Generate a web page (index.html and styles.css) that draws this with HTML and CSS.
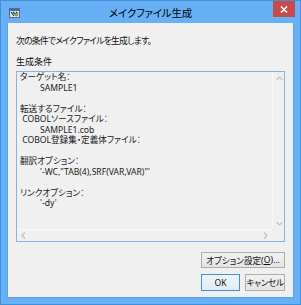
FILE: index.html
```html
<!DOCTYPE html>
<html lang="ja">
<head>
<meta charset="utf-8">
<link rel="stylesheet" href="styles.css">
</head>
<body>
<div class="window">
  <div class="titlebar">
    <div class="tb-left">
      <svg class="app-icon" width="11" height="10" viewBox="0 0 11 10">
        <rect x="0.5" y="0.5" width="10" height="9" fill="#dfe6ee" stroke="#5c6a7a"/>
        <rect x="1" y="1" width="9" height="2" fill="#3d6fb0"/>
        <path d="M2 4 L5 8 M4 4 L8 8 M7 4 L9 6" stroke="#2f3c4a" stroke-width="1.2"/>
        <rect x="6" y="5" width="3" height="3" fill="#8a9a5a"/>
      </svg>
    </div>
    <div class="title">メイクファイル生成</div>
    <div class="tb-right">
      <div class="close-btn">
        <svg width="8" height="7" viewBox="0 0 8 7"><path d="M1 0.5 L7 6.5 M7 0.5 L1 6.5" stroke="#fff" stroke-width="1.6"/></svg>
      </div>
    </div>
  </div>
  <div class="client">
    <div class="message">次の条件でメイクファイルを生成します。</div>
    <div class="label">生成条件</div>
    <div class="textbox">
      <div class="content">
        <div class="line">ターゲット名：</div>
        <div class="line indent">SAMPLE1</div>
        <div class="line"> </div>
        <div class="line">転送するファイル：</div>
        <div class="line"> COBOLソースファイル：</div>
        <div class="line indent">SAMPLE1.cob</div>
        <div class="line"> COBOL登録集・定義体ファイル：</div>
        <div class="line"> </div>
        <div class="line">翻訳オプション：</div>
        <div class="line indent">'-WC,"TAB(4),SRF(VAR,VAR)"'</div>
        <div class="line"> </div>
        <div class="line">リンクオプション：</div>
        <div class="line indent">'-dy'</div>
      </div>
      <div class="vscroll">
        <svg width="7" height="5" viewBox="0 0 7 5"><path d="M0.5 4 L3.5 1 L6.5 4" fill="none" stroke="#c2c2c2" stroke-width="1.2"/></svg>
        <svg width="7" height="5" viewBox="0 0 7 5"><path d="M0.5 1 L3.5 4 L6.5 1" fill="none" stroke="#c2c2c2" stroke-width="1.2"/></svg>
      </div>
      <div class="hscroll">
        <svg width="5" height="7" viewBox="0 0 5 7"><path d="M4 0.5 L1 3.5 L4 6.5" fill="none" stroke="#c2c2c2" stroke-width="1.2"/></svg>
        <svg width="5" height="7" viewBox="0 0 5 7"><path d="M1 0.5 L4 3.5 L1 6.5" fill="none" stroke="#c2c2c2" stroke-width="1.2"/></svg>
      </div>
      <div class="corner"></div>
    </div>
    <div class="buttons">
      <div class="btn btn-options">オプション設定(<u>O</u>)...</div>
      <div class="btn-row">
        <div class="btn btn-ok">OK</div>
        <div class="btn btn-cancel">キャンセル</div>
      </div>
    </div>
  </div>
</div>
</body>
</html>
```
FILE: styles.css
```css
* { box-sizing: border-box; }
html, body {
  margin: 0;
  padding: 0;
  background: #ffffff;
}
body {
  font-family: "Noto Sans", "Noto Sans CJK JP", sans-serif;
  font-feature-settings: "palt";
  color: #1a1a1a;
}
.window {
  width: 301px;
  height: 305px;
  background: #67b0f5;
  border: 1px solid #3f8fd9;
  display: flex;
  flex-direction: column;
}
.titlebar {
  height: 22px;
  display: grid;
  grid-template-columns: 1fr auto 1fr;
  align-items: start;
}
.tb-left {
  padding: 7px 0 0 8px;
  display: flex;
}
.app-icon { display: block; }
.title {
  font-size: 10.5px;
  line-height: 12px;
  padding-top: 6px;
  color: #000;
  letter-spacing: -0.2px;
}
.tb-right {
  display: flex;
  justify-content: flex-end;
  padding-right: 5px;
}
.close-btn {
  width: 22px;
  height: 16px;
  background: #c74a4b;
  display: flex;
  align-items: center;
  justify-content: center;
}
.close-btn svg { display: block; }
.client {
  margin: 0 6px 0 6px;
  height: 275px;
  background: #f0f0f0;
  border: 1px solid #5aa2e6;
  border-top: none;
  padding: 12px 8px 5px 8px;
  display: flex;
  flex-direction: column;
}
.message {
  font-size: 8.8px;
  line-height: 12px;
  height: 12px;
  letter-spacing: -0.75px;
  white-space: nowrap;
  color: #111;
}
.label {
  margin-top: 9px;
  font-size: 9px;
  line-height: 12px;
  height: 12px;
  color: #111;
}
.textbox {
  margin-top: 3px;
  height: 171px;
  border: 1px solid #80b5ea;
  background: #f0f0f0;
  display: grid;
  grid-template-columns: 1fr 12px;
  grid-template-rows: 1fr 12px;
}
.content {
  padding: 0 0 0 3px;
  overflow: hidden;
}
.line {
  font-size: 8.6px;
  line-height: 10.5px;
  height: 10.5px;
  white-space: pre;
  color: #1a1a1a;
}
.indent { padding-left: 20px; }
.vscroll {
  border-left: 1px solid #f9f9f2;
  display: flex;
  flex-direction: column;
  justify-content: space-between;
  align-items: center;
  padding: 4px 0 3px 1px;
}
.hscroll {
  border-top: 1px solid #f9f9f2;
  display: flex;
  justify-content: space-between;
  align-items: center;
  padding: 0 4px 0 4px;
}
.vscroll svg, .hscroll svg { display: block; }
.corner { background: #f0f0f0; }
.buttons {
  margin-top: 10px;
  display: flex;
  flex-direction: column;
  align-items: flex-end;
  gap: 6px;
}
.btn {
  font-size: 8.6px;
  white-space: nowrap;
  border: 1px solid #adadad;
  background: linear-gradient(#f2f2f2, #e4e4e4);
  display: flex;
  align-items: center;
  justify-content: center;
  color: #111;
}
.btn-options {
  width: 84px;
  height: 16px;
}
.btn-row {
  display: flex;
  gap: 5px;
}
.btn-ok {
  width: 39px;
  height: 17px;
  border-color: #3c90dc;
  background: linear-gradient(#eef3f9, #e2ebf5);
}
.btn-cancel {
  width: 40px;
  height: 17px;
  letter-spacing: -0.3px;
}
```
